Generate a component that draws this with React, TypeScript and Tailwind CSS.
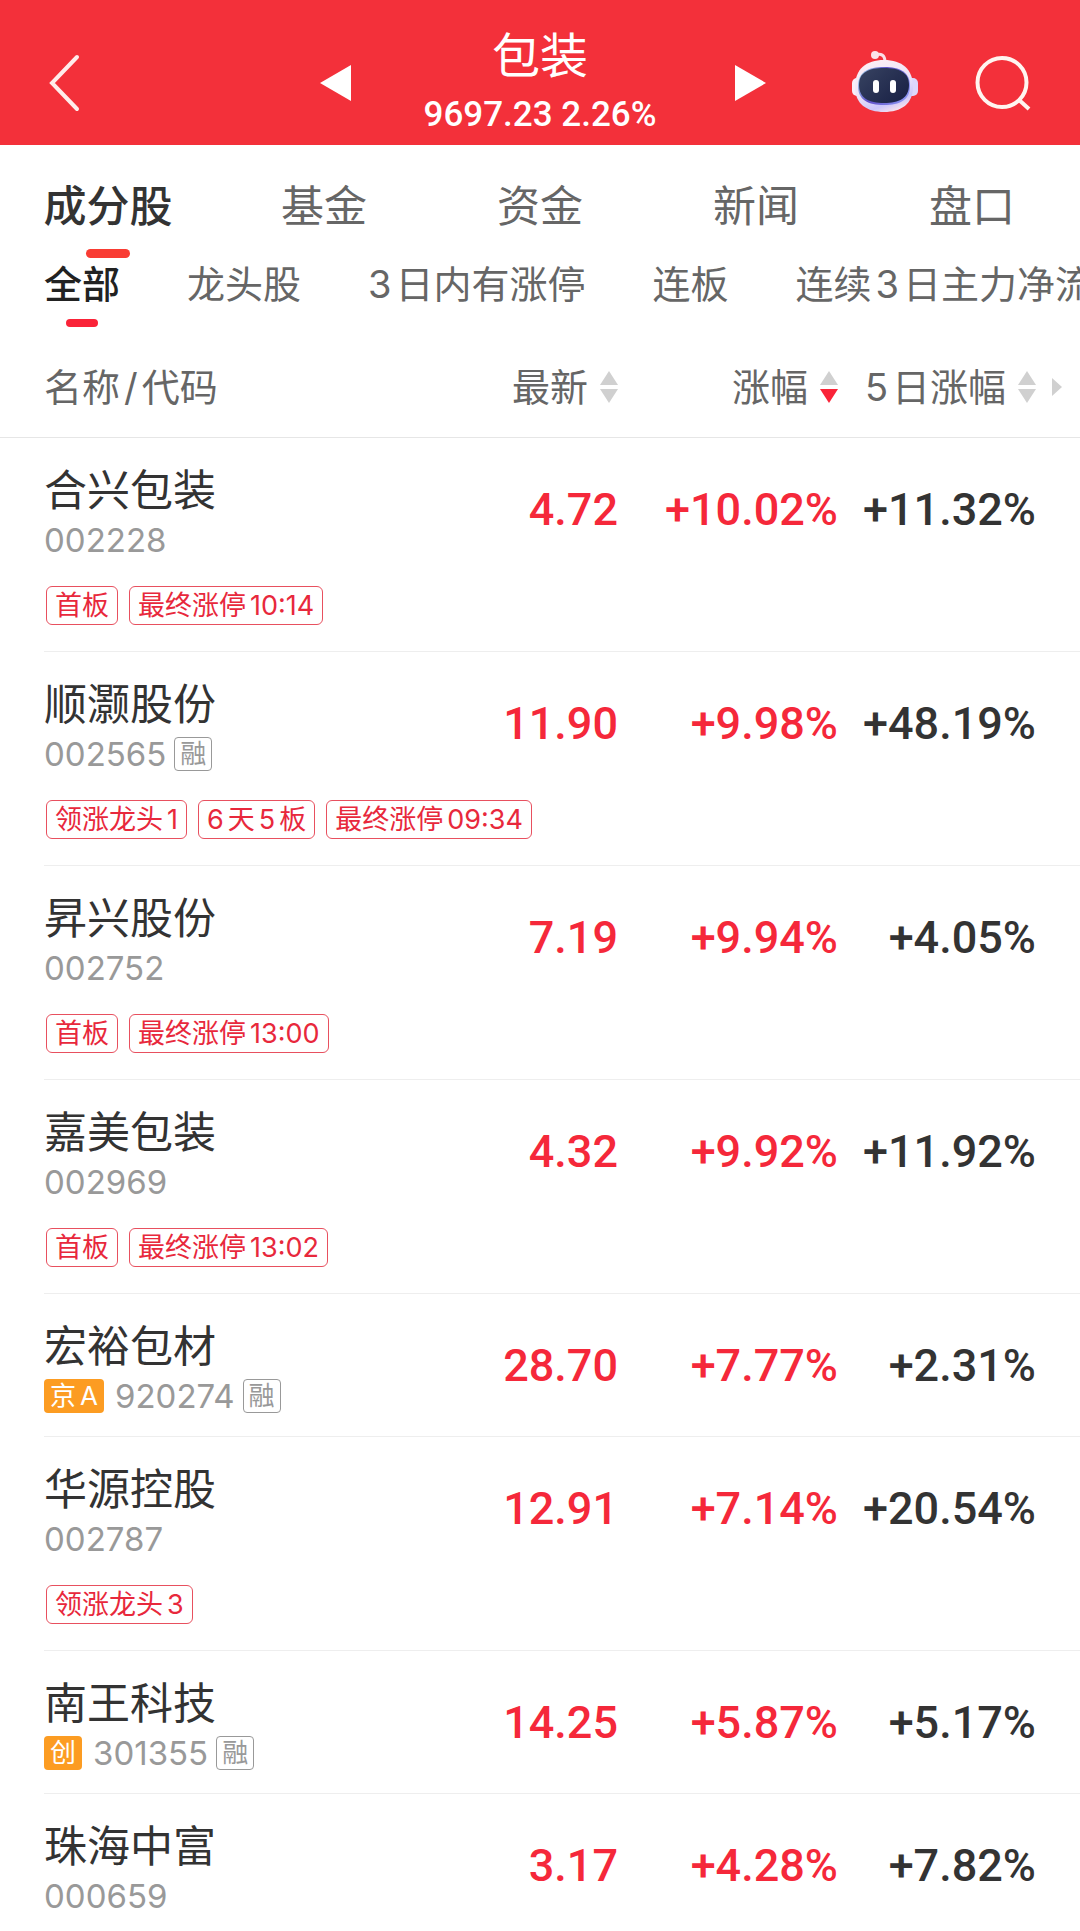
import { Fragment, useState } from 'react';
import clsx from 'clsx';

type SortDirection = 'asc' | 'desc';

type Stock = {
  name: string;
  code: string;
  price: string;
  change: string;
  fiveDayChange: string;
  board?: string;
  margin?: boolean;
  tags?: string[];
};

const TABS = ['成分股', '基金', '资金', '新闻', '盘口'];

const FILTERS = ['全部', '龙头股', '3日内有涨停', '连板', '连续3日主力净流'];

const STOCKS: Stock[] = [
  {
    name: '合兴包装',
    code: '002228',
    price: '4.72',
    change: '+10.02%',
    fiveDayChange: '+11.32%',
    tags: ['首板', '最终涨停10:14'],
  },
  {
    name: '顺灏股份',
    code: '002565',
    price: '11.90',
    change: '+9.98%',
    fiveDayChange: '+48.19%',
    margin: true,
    tags: ['领涨龙头1', '6天5板', '最终涨停09:34'],
  },
  {
    name: '昇兴股份',
    code: '002752',
    price: '7.19',
    change: '+9.94%',
    fiveDayChange: '+4.05%',
    tags: ['首板', '最终涨停13:00'],
  },
  {
    name: '嘉美包装',
    code: '002969',
    price: '4.32',
    change: '+9.92%',
    fiveDayChange: '+11.92%',
    tags: ['首板', '最终涨停13:02'],
  },
  {
    name: '宏裕包材',
    code: '920274',
    price: '28.70',
    change: '+7.77%',
    fiveDayChange: '+2.31%',
    board: '京A',
    margin: true,
  },
  {
    name: '华源控股',
    code: '002787',
    price: '12.91',
    change: '+7.14%',
    fiveDayChange: '+20.54%',
    tags: ['领涨龙头3'],
  },
  {
    name: '南王科技',
    code: '301355',
    price: '14.25',
    change: '+5.87%',
    fiveDayChange: '+5.17%',
    board: '创',
    margin: true,
  },
  {
    name: '珠海中富',
    code: '000659',
    price: '3.17',
    change: '+4.28%',
    fiveDayChange: '+7.82%',
  },
];

// Leaves a small gap where Latin letters or digits meet Chinese characters
const MixedText = ({ children }: { children: string }) => {
  const parts = children.split(/([A-Z0-9:/]+)/).filter(Boolean);

  return (
    <span>
      {parts.map((part, i) =>
        /^[A-Z0-9:/]/.test(part) ? (
          <span key={i} className={clsx(i > 0 && 'ml-1', i < parts.length - 1 && 'mr-1')}>
            {part}
          </span>
        ) : (
          <Fragment key={i}>{part}</Fragment>
        )
      )}
    </span>
  );
};

const RobotIcon = () => (
  <svg width="68" height="65" viewBox="0 0 68 65" fill="none">
    <defs>
      <linearGradient id="shell" x1="20" y1="10" x2="40" y2="62" gradientUnits="userSpaceOnUse">
        <stop stopColor="#fdeff5" />
        <stop offset="0.55" stopColor="#ece2f8" />
        <stop offset="0.85" stopColor="#cbc6fa" />
        <stop offset="1" stopColor="#f3dfee" />
      </linearGradient>
      <linearGradient id="rim" x1="8" y1="20" x2="60" y2="50" gradientUnits="userSpaceOnUse">
        <stop stopColor="#a9dff0" />
        <stop offset="0.4" stopColor="#5f4fc8" />
        <stop offset="1" stopColor="#8f9cf6" />
      </linearGradient>
      <linearGradient id="visor" x1="16" y1="18" x2="48" y2="53" gradientUnits="userSpaceOnUse">
        <stop stopColor="#35405f" />
        <stop offset="1" stopColor="#1b2347" />
      </linearGradient>
    </defs>
    <path d="M25 5C31 3 35 5 35 12" stroke="#fbdfe6" strokeWidth="3" strokeLinecap="round" />
    <circle cx="25" cy="5" r="4" fill="#fbe3ea" />
    <rect x="2" y="28" width="12" height="18" rx="5" fill="#f7eef9" />
    <rect x="56" y="28" width="12" height="18" rx="5" fill="#ddd6fb" />
    <path
      d="M34 10C52 10 63 19 63 37C63 54 51 62 34 62C17 62 5 54 5 37C5 19 16 10 34 10Z"
      fill="url(#shell)"
    />
    <path
      d="M34 17C50 17 60 22 60 36C60 50 50 55 34 55C18 55 8 50 8 36C8 22 18 17 34 17Z"
      fill="url(#rim)"
    />
    <path
      d="M34 18C49 18 59 22 59 35C59 48 49 53 34 53C19 53 9 48 9 35C9 22 19 18 34 18Z"
      fill="url(#visor)"
    />
    <rect x="23" y="30" width="6" height="13" rx="3" fill="#fff" />
    <rect x="40" y="30" width="6" height="13" rx="3" fill="#fff" />
  </svg>
);

const SortIcon = ({ direction }: { direction?: SortDirection }) => (
  <svg width="18" height="34" viewBox="0 0 18 34" className="shrink-0">
    <path d="M9 1L18 15H0Z" fill={direction === 'asc' ? '#fa2338' : '#d0d0d0'} />
    <path d="M9 33L18 19H0Z" fill={direction === 'desc' ? '#fa2338' : '#d0d0d0'} />
  </svg>
);

const Header = () => (
  <header className="grid grid-cols-[1fr_auto_1fr] items-center bg-[#f3303a] pt-5 text-white">
    <div className="pl-11">
      <button type="button" aria-label="返回" className="block">
        <svg width="40" height="60" viewBox="0 0 40 60" fill="none">
          <path d="M33 4L8 30L33 56" stroke="#ffeceb" strokeWidth="4" strokeLinecap="round" />
        </svg>
      </button>
    </div>

    <div className="flex w-[452px] items-center justify-between">
      <button type="button" aria-label="上一个">
        <svg width="40" height="40" viewBox="0 0 40 40" fill="#fff">
          <path d="M37 2V38L6 20Z" />
        </svg>
      </button>
      <div className="pt-1 text-center">
        <h1 className="text-[48px] leading-[64px]">包装</h1>
        <p className="pb-1 font-[Roboto] text-[35px] leading-[53px] font-medium">9697.23 2.26%</p>
      </div>
      <button type="button" aria-label="下一个">
        <svg width="40" height="40" viewBox="0 0 40 40" fill="#fff">
          <path d="M9 2V38L40 20Z" />
        </svg>
      </button>
    </div>

    <div className="flex items-center justify-end gap-14 pr-12">
      <button type="button" aria-label="智能助手">
        <RobotIcon />
      </button>
      <button type="button" aria-label="搜索">
        <svg width="58" height="60" viewBox="0 0 58 60" fill="none" stroke="#fff5f0" strokeWidth="4">
          <circle cx="28" cy="29.500" r="24.500" />
          <path d="M44 46L55 56" />
        </svg>
      </button>
    </div>
  </header>
);

const NameCell = ({ stock }: { stock: Stock }) => (
  <div
    className={clsx(
      'ml-11 border-b border-[#eeeeee] pt-6 whitespace-nowrap',
      stock.tags ? 'pb-[26px]' : 'pb-[18px]'
    )}
  >
    <div className="text-[43px] leading-[56px] text-[#333333]">{stock.name}</div>
    <div className="flex h-11 items-center text-[33px] text-[#999999]">
      {stock.board && (
        <span className="mr-[11px] rounded-sm bg-[#fc9c22] px-[6px] text-[26px] leading-[34px] text-white">
          <MixedText>{stock.board}</MixedText>
        </span>
      )}
      <span className="leading-11">{stock.code}</span>
      {stock.margin && (
        <span className="ml-2 rounded-sm border border-[#999999] px-[5px] text-[26px] leading-[32px]">
          融
        </span>
      )}
    </div>
    {stock.tags && (
      <ul className="mt-6 ml-[2px] flex gap-[11px]">
        {stock.tags.map((tag) => (
          <li
            key={tag}
            className="shrink-0 rounded-md border border-[#e8505f] px-2 text-[27px] leading-[37px] text-[#e8283c]"
          >
            <MixedText>{tag}</MixedText>
          </li>
        ))}
      </ul>
    )}
  </div>
);

const headCell = 'border-b border-[#e6e6e6] pt-[35px] pb-[25px] font-normal';

const valueCell =
  'border-b border-[#eeeeee] pt-11 text-right align-top font-[Roboto] text-[45px] leading-14 font-medium';

export default function App() {
  const [activeTab, setActiveTab] = useState(TABS[0]);
  const [activeFilter, setActiveFilter] = useState(FILTERS[0]);

  return (
    <div className="flex h-screen flex-col overflow-hidden bg-white font-[Inter,'Noto_Sans_CJK_SC',sans-serif] text-[#666666]">
      <Header />

      <nav className="grid shrink-0 grid-cols-5">
        {TABS.map((tab) => (
          <button
            key={tab}
            type="button"
            onClick={() => setActiveTab(tab)}
            className={clsx(
              'flex flex-col items-center pt-[33px] text-[43px] leading-[56px]',
              tab === activeTab && 'font-medium text-[#333333]'
            )}
          >
            {tab}
            {tab === activeTab && <span className="mt-[15px] h-[9px] w-11 rounded-full bg-[#f93c33]" />}
          </button>
        ))}
      </nav>

      <div className="flex shrink-0 gap-[67px] overflow-x-auto px-11 pt-1 [scrollbar-width:none]">
        {FILTERS.map((filter) => (
          <button
            key={filter}
            type="button"
            onClick={() => setActiveFilter(filter)}
            className={clsx(
              'flex shrink-0 flex-col items-center text-[38px] leading-11 whitespace-nowrap',
              filter === activeFilter && 'font-medium text-[#222222]'
            )}
          >
            <MixedText>{filter}</MixedText>
            {filter === activeFilter && <span className="mt-[13px] h-2 w-8 rounded-sm bg-[#fa2338]" />}
          </button>
        ))}
      </div>

      <main className="min-h-0 flex-1 overflow-y-auto [scrollbar-width:none]">
        <table className="w-full table-fixed border-separate border-spacing-0">
          <colgroup>
            <col />
            <col className="w-[190px]" />
            <col className="w-[220px]" />
            <col className="w-[242px]" />
          </colgroup>
          <thead className="text-[38px] leading-[50px] whitespace-nowrap">
            <tr>
              <th className={clsx(headCell, 'pl-11 text-left')}>
                <MixedText>名称/代码</MixedText>
              </th>
              <th className={headCell}>
                <button type="button" className="ml-auto flex items-center gap-3">
                  最新
                  <SortIcon />
                </button>
              </th>
              <th className={headCell}>
                <button type="button" className="ml-auto flex items-center gap-3">
                  涨幅
                  <SortIcon direction="desc" />
                </button>
              </th>
              <th className={clsx(headCell, 'pr-[18px]')}>
                <div className="flex items-center justify-end gap-4">
                  <button type="button" className="flex items-center gap-3">
                    <MixedText>5日涨幅</MixedText>
                    <SortIcon />
                  </button>
                  <svg width="10" height="18" viewBox="0 0 10 18">
                    <path d="M0 0L10 9L0 18Z" fill="#d0d0d0" />
                  </svg>
                </div>
              </th>
            </tr>
          </thead>
          <tbody>
            {STOCKS.map((stock) => (
              <tr key={stock.code}>
                <td>
                  <NameCell stock={stock} />
                </td>
                <td className={clsx(valueCell, 'text-[#f5283a]')}>{stock.price}</td>
                <td className={clsx(valueCell, 'text-[#f5283a]')}>{stock.change}</td>
                <td className={clsx(valueCell, 'pr-11 text-[#333333]')}>{stock.fiveDayChange}</td>
              </tr>
            ))}
          </tbody>
        </table>
      </main>
    </div>
  );
}
